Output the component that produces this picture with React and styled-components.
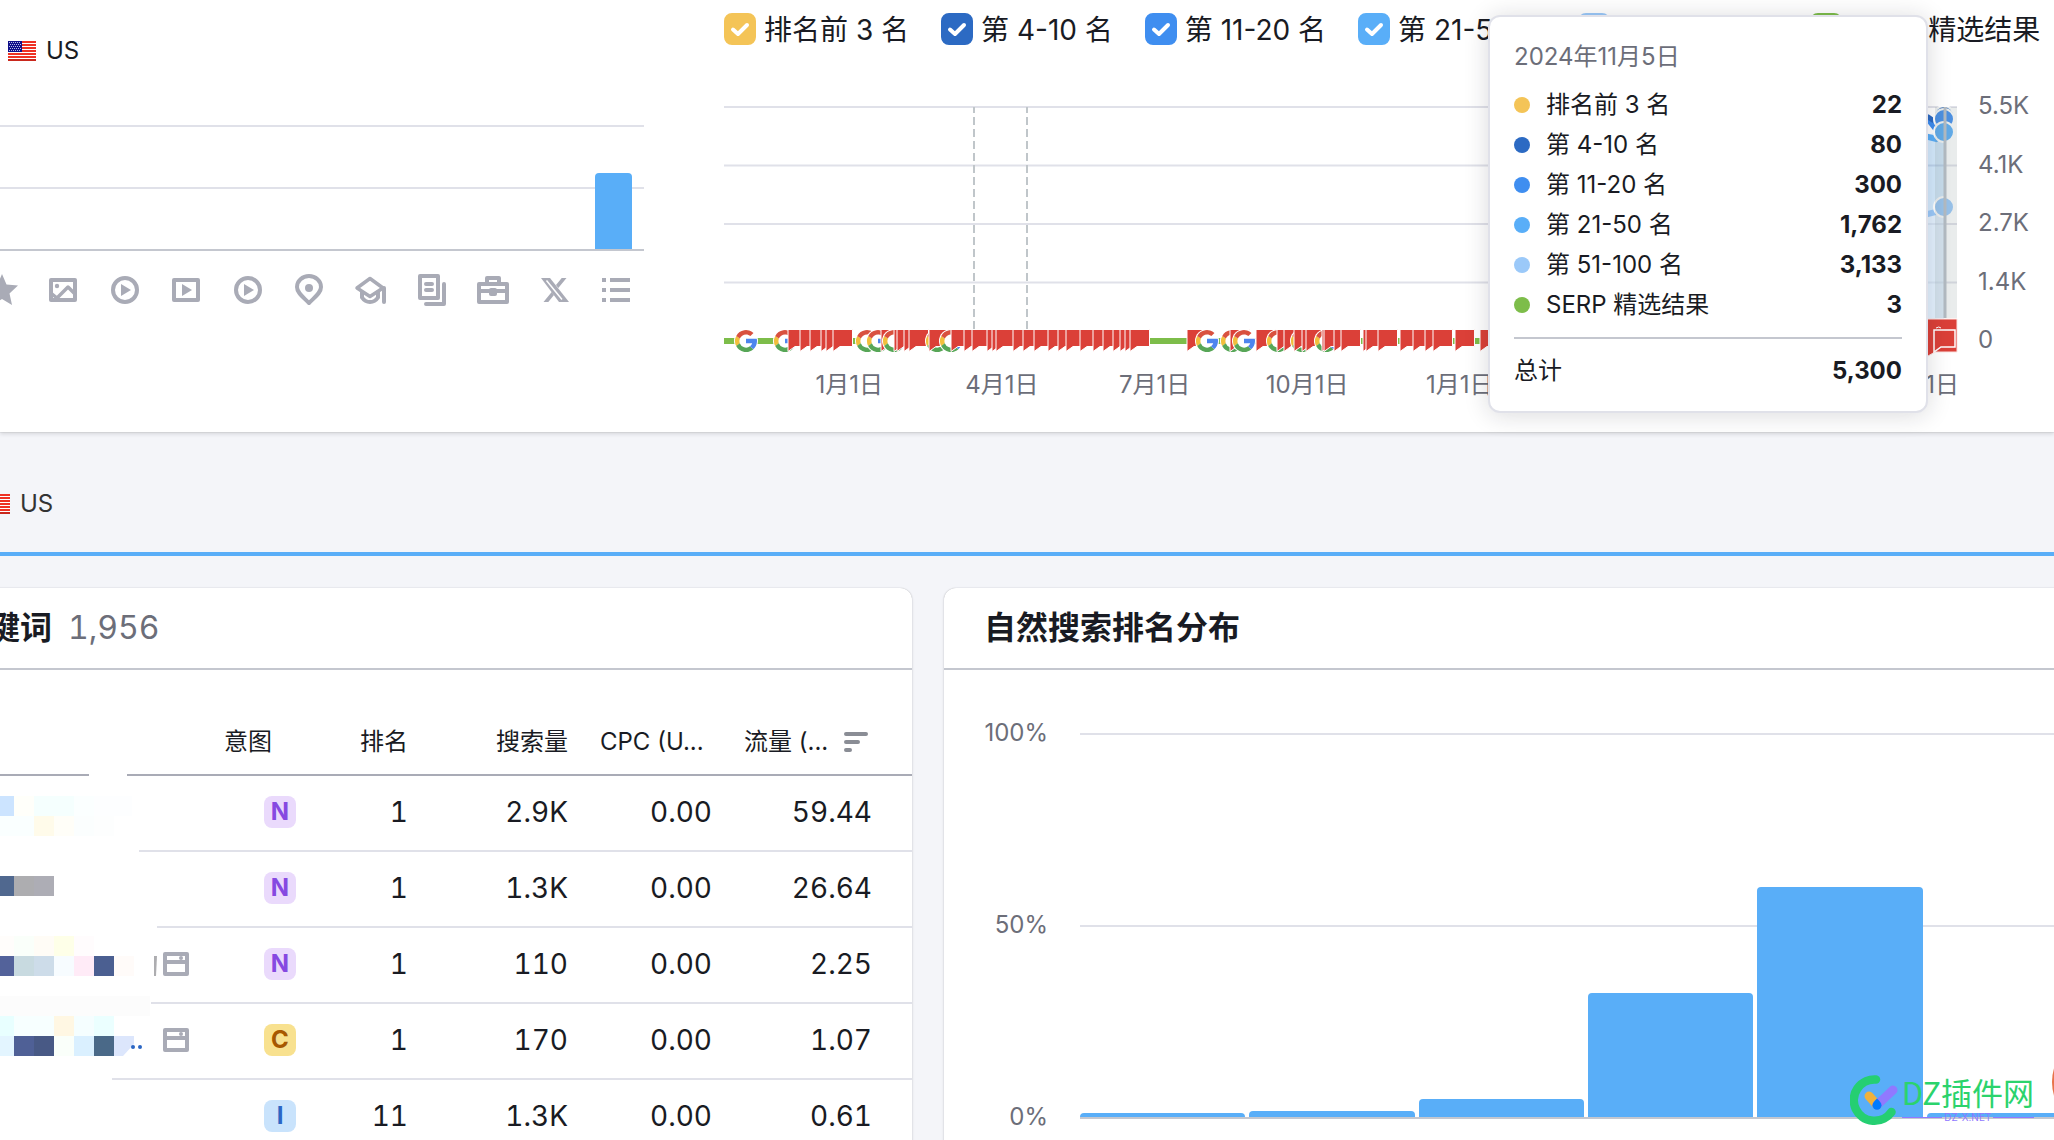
import React, { useState } from "react";
import styled, { createGlobalStyle } from "styled-components";

const GlobalStyle = createGlobalStyle`
  * {
    box-sizing: border-box;
  }
  body {
    margin: 0;
    background: #f4f5f9;
    color: #191b23;
    font-family: Inter, "Noto Sans CJK SC", sans-serif;
    font-size: 24px;
    line-height: 32px;
  }
`;

const LEGEND = [
  { id: "top3", label: "排名前 3 名", color: "#f4c457", value: "22" },
  { id: "p4", label: "第 4-10 名", color: "#2c6ac3", value: "80" },
  { id: "p11", label: "第 11-20 名", color: "#3f8ef0", value: "300" },
  { id: "p21", label: "第 21-50 名", color: "#59aef8", value: "1,762" },
  { id: "p51", label: "第 51-100 名", color: "#9bc9f9", value: "3,133" },
  { id: "serp", label: "SERP 精选结果", color: "#7dbd4a", value: "3" },
];

const DATES = ["1月1日", "4月1日", "7月1日", "10月1日", "1月1日", "4月1日", "7月1日", "10月1日"];

// g = google update, n = note; x is the left edge inside the plot
const MARKERS = [
  ["g", 11], ["g", 50], ["n", 64], ["n", 76], ["n", 86], ["n", 97], ["n", 102], ["n", 109],
  ["g", 132], ["n", 150], ["g", 143], ["n", 157], ["g", 159], ["n", 170], ["n", 173], ["n", 180], ["n", 185],
  ["g", 202], ["n", 205], ["g", 216], ["n", 227], ["n", 240], ["n", 248], ["n", 263], ["n", 268],
  ["n", 272], ["n", 289], ["n", 299], ["n", 310], ["n", 324], ["n", 334], ["n", 342], ["n", 356],
  ["n", 369], ["n", 379], ["n", 389], ["n", 396], ["n", 401], ["n", 406],
  ["n", 463], ["g", 472], ["g", 497], ["n", 506], ["g", 509], ["n", 532], ["g", 543], ["n", 553],
  ["n", 560], ["g", 567], ["n", 570], ["n", 578], ["n", 582], ["g", 591], ["n", 598], ["n", 600],
  ["n", 610], ["n", 617], ["n", 639], ["n", 642], ["n", 654], ["n", 676], ["n", 689], ["n", 701],
  ["n", 709], ["n", 731], ["n", 756],
];

const ROWS = [
  { intent: "N", page: false, rank: "1", volume: "2.9K", cpc: "0.00", traffic: "59.44" },
  { intent: "N", page: false, rank: "1", volume: "1.3K", cpc: "0.00", traffic: "26.64" },
  { intent: "N", page: true, rank: "1", volume: "110", cpc: "0.00", traffic: "2.25" },
  { intent: "C", page: true, rank: "1", volume: "170", cpc: "0.00", traffic: "1.07" },
  { intent: "I", page: false, rank: "11", volume: "1.3K", cpc: "0.00", traffic: "0.61" },
];

const INTENTS = {
  N: { bg: "#eadafc", fg: "#8649e1" },
  C: { bg: "#f8e18f", fg: "#a75800" },
  I: { bg: "#c9e3fc", fg: "#2b66c4" },
};

const DISTRIBUTION = [1, 1.6, 4.7, 32.4, 60, 1];

// [x, y, width, color] of the blurred keyword blocks, all 20px tall
const BLOCKS = [
  [0, 20, 14, "#cce4ff"], [14, 20, 20, "#fffffa"], [34, 20, 40, "#f5fffe"], [74, 20, 20, "#fbffff"],
  [94, 20, 38, "#fdfeff"],
  [0, 40, 34, "#faffff"], [34, 40, 20, "#fffbea"], [54, 40, 20, "#fffef8"], [74, 40, 20, "#fbfefe"],
  [94, 40, 20, "#fdfefe"],
  [0, 100, 14, "#50688f"], [14, 100, 20, "#adadb0"], [34, 100, 20, "#adadb5"],
  [0, 160, 14, "#fffdfb"], [14, 160, 20, "#fafffa"], [34, 160, 20, "#fffcf6"], [54, 160, 20, "#feffe8"], [74, 160, 20, "#fffcfd"],
  [0, 180, 14, "#53629a"], [14, 180, 20, "#c8dae0"], [34, 180, 20, "#cddce9"], [54, 180, 20, "#f7fcff"],
  [74, 180, 20, "#ffebf7"], [94, 180, 20, "#4b5f91"], [114, 180, 20, "#fffbf9"],
  [0, 220, 150, "#fcfcfc"],
  [0, 240, 14, "#e8ffff"], [14, 240, 40, "#f7ffff"], [54, 240, 20, "#fff7e3"], [74, 240, 20, "#f5feff"], [94, 240, 20, "#ebffff"],
  [0, 260, 14, "#e3f5ff"], [14, 260, 20, "#4f6096"], [34, 260, 20, "#485985"], [54, 260, 20, "#fafffa"],
  [74, 260, 20, "#daf0ff"], [94, 260, 20, "#4a6988"],
];

const Page = styled.main`
  position: relative;
  height: 100vh;
  overflow: hidden;
`;

const Overview = styled.section`
  display: grid;
  grid-template-columns: 644fr 1330fr;
  column-gap: 80px;
  padding-bottom: 31px;
  background: #fff;
  box-shadow: 0 0 1px rgba(25, 27, 35, 0.3), 0 2px 4px rgba(25, 27, 35, 0.14);
`;

const Column = styled.div`
  min-width: 0;
`;

const Country = styled.div`
  display: flex;
  align-items: center;
  gap: 10px;
  color: ${({ $muted }) => ($muted ? "#333" : "#191b23")};
`;

const OverviewCountry = styled(Country)`
  margin: 35px 0 58px;
  padding-left: 8px;
`;

const Plot = styled.div`
  position: relative;
  display: grid;
  grid-template-rows: repeat(2, ${({ $step }) => $step}px);
  border-bottom: 2px solid #c4c7cf;
`;

const GridLine = styled.div`
  border-top: 2px solid #e0e1e9;
`;

const Bars = styled.div`
  position: absolute;
  inset: 0;
  display: flex;
  align-items: flex-end;
  justify-content: flex-end;
  gap: 4px;
  padding-right: ${({ $end }) => $end || 0}px;
`;

const Bar = styled.div`
  flex: ${({ $width }) => ($width ? `0 0 ${$width}px` : "1 1 0")};
  border-radius: 4px 4px 0 0;
  background: #59aef8;
`;

const FeatureIcons = styled.div`
  display: flex;
  justify-content: space-between;
  margin: 23px 0 0 -14px;
  padding-right: 12px;
  color: #a9abb6;

  svg {
    display: block;
    width: 32px;
    height: 32px;
    flex: none;
  }
`;

const Legend = styled.div`
  display: flex;
  gap: 32px;
  padding-top: 13px;
  white-space: nowrap;
`;

const LegendItem = styled.label`
  display: flex;
  gap: 8px;
  font-size: 28px;
  line-height: 34px;
`;

const Check = styled.input`
  appearance: none;
  flex: none;
  width: 32px;
  height: 32px;
  margin: 0;
  border: 2px solid ${({ $color }) => $color};
  border-radius: 8px;
  background: #fff;

  &:checked {
    background: ${({ $color }) => $color}
      url("data:image/svg+xml,%3Csvg xmlns='http://www.w3.org/2000/svg' viewBox='0 0 32 32'%3E%3Cpath d='M9 16.5l5 4.500L23 12' fill='none' stroke='white' stroke-width='4' stroke-linecap='round' stroke-linejoin='round'/%3E%3C/svg%3E")
      center / 32px 32px;
  }
`;

const Trend = styled.div`
  display: grid;
  grid-template-columns: minmax(0, 1fr) 97px;
  margin-top: 46px;

  svg {
    display: block;
    width: 100%;
    overflow: visible;
  }
`;

const Scale = styled.div`
  display: flex;
  flex-direction: column;
  justify-content: space-between;
  padding: 1px 0 1px 21px;
  color: #6c6e79;
  line-height: 24px;
`;

const Dates = styled.div`
  display: grid;
  grid-template-columns: repeat(8, 1fr);
  margin-top: 16px;
  padding: 0 60px 0 49px;
  color: #6c6e79;
  text-align: center;
  white-space: nowrap;
`;

const Tooltip = styled.div`
  position: absolute;
  top: 15px;
  right: 126px;
  width: 440px;
  padding: 24px;
  border: 2px solid #e0e1e9;
  border-radius: 12px;
  background: #fff;
  box-shadow: 0 2px 24px rgba(25, 27, 35, 0.16);
`;

const TooltipDate = styled.div`
  margin-bottom: 12px;
  color: #6c6e79;
`;

const TooltipRow = styled.div`
  display: flex;
  align-items: center;
  gap: 16px;
  height: 40px;
`;

const Dot = styled.span`
  width: 16px;
  height: 16px;
  border-radius: 50%;
  background: ${({ $color }) => $color};
`;

const Value = styled.strong`
  margin-left: auto;
  font-weight: 700;
`;

const TooltipTotal = styled.div`
  display: flex;
  margin-top: 12px;
  padding-top: 16px;
  border-top: 2px solid #c4c7cf;
`;

const Section = styled.header`
  padding: 56px 0 32px;
  border-bottom: 4px solid #59aef8;
`;

const SectionCountry = styled(Country)`
  margin-left: -18px;
`;

const Cards = styled.div`
  display: grid;
  grid-template-columns: 952fr 1148fr;
  gap: 32px;
  margin: 32px -38px 0 -40px;
`;

const Card = styled.section`
  position: relative;
  min-width: 0;
  border-radius: 12px;
  background: #fff;
  box-shadow: 0 0 1px rgba(25, 27, 35, 0.3), 0 1px 3px rgba(25, 27, 35, 0.14);
`;

const CardHeader = styled.div`
  display: flex;
  align-items: center;
  gap: 16px;
  height: 82px;
  padding: 0 ${({ $start }) => $start}px;
  border-bottom: 2px solid #c4c7cf;
  font-size: 32px;
`;

const Title = styled.h2`
  margin: 0;
  font-size: 32px;
  font-weight: 700;
`;

const Count = styled.span`
  color: #6c6e79;
  font-variant-numeric: tabular-nums;
`;

const Table = styled.table`
  width: 100%;
  table-layout: fixed;
  border-collapse: separate;
  border-spacing: 0;
  white-space: nowrap;
`;

const Col = styled.col`
  width: ${({ $width }) => $width}px;
`;

const Th = styled.th`
  padding: 56px 16px 16px;
  border-bottom: 2px solid #a9abb6;
  font-weight: 400;
  text-align: ${({ $align }) => $align || "left"};
`;

const Sort = styled.button`
  display: flex;
  align-items: center;
  gap: 16px;
  padding: 0;
  border: 0;
  background: none;
  color: inherit;
  font: inherit;
`;

const Td = styled.td`
  height: 76px;
  padding: 20px ${({ $end }) => $end || 16}px 22px 16px;
  border-bottom: 2px solid #e0e1e9;
  font-size: 28px;
  font-variant-numeric: tabular-nums;
  text-align: right;

  svg {
    display: block;
    margin: 0 0 0 auto;
  }
`;

const Badge = styled.span`
  display: block;
  width: 32px;
  height: 32px;
  margin-left: auto;
  border-radius: 8px;
  background: ${({ $intent }) => INTENTS[$intent].bg};
  color: ${({ $intent }) => INTENTS[$intent].fg};
  font-size: 24px;
  font-weight: 700;
  text-align: center;
`;

const Mask = styled.svg`
  position: absolute;
  top: 186px;
  left: 40px;
`;

const Distribution = styled.div`
  display: grid;
  grid-template-columns: 104px minmax(0, 1fr);
  column-gap: 32px;
  padding-top: 51px;
`;

const Percents = styled.div`
  display: flex;
  flex-direction: column;
  justify-content: space-between;
  height: 408px;
  color: #6c6e79;
  line-height: 24px;
  text-align: right;
`;

const DistributionPlot = styled(Plot)`
  align-self: start;
  margin-top: 12px;
`;

const Watermark = styled.div`
  position: absolute;
  right: 20px;
  bottom: 14px;
  display: flex;
  gap: 2px;
  color: #2bd36c;
  font-family: "Noto Sans CJK SC", sans-serif;
`;

const WatermarkName = styled.div`
  font-size: 31px;
  line-height: 36px;
`;

const WatermarkSite = styled.div`
  display: flex;
  align-items: center;
  gap: 2px;
  color: #9079ff;
  font-family: Inter, sans-serif;
  font-size: 10px;
  line-height: 14px;

  &::before,
  &::after {
    content: "";
    flex: 1;
    height: 1px;
    background: #9079ff;
  }
`;

const HelpBubble = styled.button`
  position: absolute;
  right: -94px;
  bottom: 10px;
  width: 96px;
  height: 96px;
  border: 0;
  border-radius: 50%;
  background: #e8734a;
`;

function Flag() {
  return (
    <svg width="28" height="20" viewBox="0 0 28 20" shapeRendering="crispEdges">
      <rect width="28" height="20" fill="#fff" />
      {[0, 3, 6, 9, 12, 15, 18].map((y) => (
        <rect key={y} y={y} width="28" height="2" fill={y === 18 ? "#c9281d" : "#ee3124"} />
      ))}
      <rect width="14" height="11" fill="#10108a" />
      {[1, 3, 5, 7, 9].map((y) => (
        <path key={y} d={`M${y % 4 === 1 ? 1 : 2} ${y + 0.5}h11`} stroke="#b9bbe6" strokeDasharray="1 1" />
      ))}
    </svg>
  );
}

function Icons() {
  const line = { fill: "none", stroke: "currentColor", strokeWidth: 4, strokeLinejoin: "round" };
  const play = <path d="M12 10l10 6-10 6z" fill="currentColor" />;
  return (
    <FeatureIcons>
      <svg viewBox="0 0 32 32">
        <path d="M16 0l4.500 10.500L32 11.500l-8.500 8L26 31l-10-6-10 6 2.500-11.500L0 11.500l11.500-1z" fill="currentColor" />
      </svg>
      <svg viewBox="0 0 32 32">
        <rect x="4" y="6" width="24" height="20" {...line} />
        <circle cx="10" cy="12" r="2.200" fill="currentColor" />
        <path d="M5 20l5 4L21 13l7 7" {...line} strokeWidth="3.500" />
      </svg>
      <svg viewBox="0 0 32 32"><circle cx="16" cy="16" r="12" {...line} />{play}</svg>
      <svg viewBox="0 0 32 32"><rect x="4" y="6" width="24" height="20" {...line} />{play}</svg>
      <svg viewBox="0 0 32 32"><circle cx="16" cy="16" r="12" {...line} />{play}</svg>
      <svg viewBox="0 0 32 32">
        <path d="M16 29C9 22 4 18.500 4 13a12 11 0 0 1 24 0c0 5.500-5 9-12 16z" {...line} />
        <circle cx="16" cy="14" r="4" fill="currentColor" />
      </svg>
      <svg viewBox="0 0 32 32">
        <path d="M16 4.500L29 14 16 22.500 3 14z" {...line} strokeWidth="3.500" />
        <path d="M8 18v5.500c4 6 12 6 16 0V18" {...line} />
        <path d="M30 14v14" {...line} strokeLinecap="round" />
      </svg>
      <svg viewBox="0 0 32 32">
        <rect x="4" y="2" width="18" height="22" {...line} />
        <path d="M10 10h6M10 16h6" {...line} strokeLinecap="round" />
        <path d="M28 10v20H10" {...line} strokeLinecap="round" />
      </svg>
      <svg viewBox="0 0 32 32">
        <path d="M2 10h28v18H2zM10 9V4h12v5M2 17h28" {...line} />
        <rect x="12" y="14" width="8" height="8" rx="2" fill="currentColor" />
      </svg>
      <svg viewBox="0 0 32 32">
        <path d="M2 4h9l19 24H20z" fill="currentColor" />
        <path d="M7.500 6.500L23 25.500" stroke="#fff" strokeWidth="1.500" />
        <path d="M27.500 4h-4.800L17 11l2.300 3zM4.500 28h4.800L15 21l-2.300-3z" fill="currentColor" />
      </svg>
      <svg viewBox="0 0 32 32">
        <path d="M2 6h4M2 16h4M2 26h4M10 6h20M10 16h20M10 26h20" {...line} />
      </svg>
    </FeatureIcons>
  );
}

function GoogleMark({ x }) {
  return (
    <g transform={`translate(${x} 223)`}>
      <circle cx="11" cy="11" r="12" fill="#fff" />
      <g transform="translate(-2.200 -2.200) scale(0.55)">
        <path fill="#f2bf3c" d="M6.300 14.700l6.600 4.800a12 12 0 0 0-.2 8.500l-6.500 5.100a20 20 0 0 1 .1-18.400z" />
        <path fill="#d9513f" d="M6.300 14.700l6.600 4.800C14.700 15.100 19 12 24 12c3.100 0 5.800 1.200 8 3l5.600-5.600A20 20 0 0 0 6.300 14.700z" />
        <path fill="#57a657" d="M24 44c5.200 0 9.900-2 13.400-5.200l-6.200-5.200A12 12 0 0 1 12.700 28l-6.500 5.100C9.500 39.600 16.200 44 24 44z" />
        <path fill="#4d85ee" d="M43.600 20H24v8h11.300a12 12 0 0 1-4.100 5.600l6.200 5.200C37 39.200 44 34 44 24c0-1.300-.1-2.700-.4-4z" />
      </g>
    </g>
  );
}

function TrendChart() {
  return (
    <svg viewBox="0 -14 1233 260">
      {[0, 58.5, 117, 175.5].map((y) => (
        <path key={y} d={`M0 ${y}H1233`} stroke="#e0e1e9" strokeWidth="2" />
      ))}
      {[250, 303].map((x) => (
        <path key={x} d={`M${x} 0V223`} stroke="#c0c6ca" strokeWidth="2" strokeDasharray="8 4" strokeDashoffset="2" />
      ))}
      <path d="M1160 34l44-6 16-5v212h-60z" fill="#59aef8" fillOpacity="0.26" />
      <path d="M1160 108l44-1 16-7v135h-60z" fill="#fff" fillOpacity="0.36" />
      <path d="M1190 24l14 6 8 2 8-8" fill="none" stroke="#59aef8" strokeWidth="6" />
      <path d="M1190 6l14 6 8 10 8-8" fill="none" stroke="#3f8ef0" strokeWidth="6" />
      <path d="M1190 8l14 2 6 4" fill="none" stroke="#2c6ac3" strokeWidth="5" />
      <path d="M1190 106l14 1 8-2 8-5" fill="none" stroke="#9bc9f9" strokeWidth="6" />
      <circle cx="1220" cy="9" r="10" fill="#2c6ac3" stroke="#fff" strokeWidth="2" />
      <circle cx="1220" cy="12" r="10" fill="#3f8ef0" stroke="#fff" strokeWidth="2" />
      <circle cx="1220" cy="25" r="10" fill="#59aef8" stroke="#fff" strokeWidth="2" />
      <circle cx="1220" cy="100" r="10" fill="#9bc9f9" stroke="#fff" strokeWidth="2" />
      <rect x="1211" width="22" height="211" fill="#8a9a9c" fillOpacity="0.19" />
      <path d="M1221 0v211" stroke="#b2bac1" strokeWidth="3" />
      <path d="M0 234H1233" stroke="#7dbd4a" strokeWidth="6" />
      {MARKERS.map(([kind, x], i) =>
        kind === "g" ? (
          <GoogleMark key={i} x={x} />
        ) : (
          <path key={i} d={`M${x} 222.500h19.500v17h-12.500l-7 5z`} fill="#db4038" stroke="#fff" />
        )
      )}
      <path d="M1197 212h36v33h-22l-14 8z" fill="#db4038" stroke="#fbe3e1" />
      <path d="M1210 223h21v17h-14l-7 5z" fill="none" stroke="#fff" strokeWidth="1.500" />
      <path d="M1212 221q3-2 5 0" fill="none" stroke="#fff" />
    </svg>
  );
}

function PageIcon() {
  return (
    <svg width="32" height="32" viewBox="0 0 32 32" fill="none" stroke="#a9abb6" strokeWidth="4" strokeLinejoin="round">
      <path d="M5 6h22v20H5zM5 14h22" />
      <circle cx="21" cy="10" r="2" fill="#a9abb6" stroke="none" />
    </svg>
  );
}

function KeywordMask() {
  return (
    <Mask width="160" height="312" viewBox="0 0 160 312">
      <path d="M89 0h38v6H89zM0 70h139v12H0zM0 146h157v12H0zM0 222h151v12H0zM0 298h112v12H0z" fill="#fff" />
      <g transform="translate(0 2)">
        {BLOCKS.map(([x, y, w, color]) => (
          <rect key={`${x}-${y}`} x={x} y={y} width={w} height="20" fill={color} />
        ))}
        <path d="M114 260h20v8l-11 12h-9z" fill="#dce6fc" />
        <path d="M154 180h3l-1 20h-2z" fill="#adadb0" />
        <circle cx="133" cy="271" r="2" fill="#2b66c4" />
        <circle cx="140" cy="271" r="2" fill="#2b66c4" />
      </g>
    </Mask>
  );
}

function Overlay() {
  return (
    <Tooltip role="tooltip">
      <TooltipDate>2024年11月5日</TooltipDate>
      {LEGEND.map((item) => (
        <TooltipRow key={item.id}>
          <Dot $color={item.color} />
          <span>{item.label}</span>
          <Value>{item.value}</Value>
        </TooltipRow>
      ))}
      <TooltipTotal>
        <span>总计</span>
        <Value>5,300</Value>
      </TooltipTotal>
    </Tooltip>
  );
}

export default function App() {
  const [hidden, setHidden] = useState([]);

  const toggle = (id) => {
    setHidden(hidden.includes(id) ? hidden.filter((h) => h !== id) : [...hidden, id]);
  };

  return (
    <Page>
      <GlobalStyle />
      <Overview>
        <Column>
          <OverviewCountry>
            <Flag />
            <span>US</span>
          </OverviewCountry>
          <Plot $step={62}>
            <GridLine />
            <GridLine />
            <Bars $end={12}>
              <Bar $width={37} style={{ height: "61%" }} />
            </Bars>
          </Plot>
          <Icons />
        </Column>
        <Column>
          <Legend>
            {LEGEND.map((item) => (
              <LegendItem key={item.id}>
                <Check
                  type="checkbox"
                  $color={item.color}
                  checked={!hidden.includes(item.id)}
                  onChange={() => toggle(item.id)}
                />
                <span>{item.label}</span>
              </LegendItem>
            ))}
          </Legend>
          <Trend>
            <TrendChart />
            <Scale>
              <span>5.5K</span>
              <span>4.1K</span>
              <span>2.7K</span>
              <span>1.4K</span>
              <span>0</span>
            </Scale>
          </Trend>
          <Dates>
            {DATES.map((date, i) => (
              <span key={i}>{date}</span>
            ))}
          </Dates>
        </Column>
      </Overview>
      <Overlay />

      <Section>
        <SectionCountry $muted>
          <Flag />
          <span>US</span>
        </SectionCountry>
      </Section>

      <Cards>
        <Card>
          <CardHeader $start={28}>
            <Title>键词</Title>
            <Count>1,956</Count>
          </CardHeader>
          <Table>
            <colgroup>
              <col />
              <Col $width={104} />
              <Col $width={112} />
              <Col $width={160} />
              <Col $width={144} />
              <Col $width={184} />
            </colgroup>
            <thead>
              <tr>
                <Th />
                <Th>意图</Th>
                <Th $align="right">排名</Th>
                <Th $align="right">搜索量</Th>
                <Th>CPC (U...</Th>
                <Th>
                  <Sort type="button">
                    流量 (...
                    <svg width="24" height="20" viewBox="0 0 24 20" stroke="#8a8d95" strokeWidth="4" strokeLinecap="round">
                      <path d="M2 2h20M2 10h12M2 18h4" />
                    </svg>
                  </Sort>
                </Th>
              </tr>
            </thead>
            <tbody>
              {ROWS.map((row, i) => (
                <tr key={i}>
                  <Td>{row.page && <PageIcon />}</Td>
                  <Td>
                    <Badge $intent={row.intent}>{row.intent}</Badge>
                  </Td>
                  <Td>{row.rank}</Td>
                  <Td>{row.volume}</Td>
                  <Td>{row.cpc}</Td>
                  <Td $end={40}>{row.traffic}</Td>
                </tr>
              ))}
            </tbody>
          </Table>
          <KeywordMask />
        </Card>
        <Card>
          <CardHeader $start={40}>
            <Title>自然搜索排名分布</Title>
          </CardHeader>
          <Distribution>
            <Percents>
              <span>100%</span>
              <span>50%</span>
              <span>0%</span>
            </Percents>
            <DistributionPlot $step={192}>
              <GridLine />
              <GridLine />
              <Bars>
                {DISTRIBUTION.map((value, i) => (
                  <Bar key={i} style={{ height: `${value}%` }} />
                ))}
              </Bars>
            </DistributionPlot>
          </Distribution>
        </Card>
      </Cards>

      <Watermark>
        <svg width="50" height="52" viewBox="0 4 50 52" fill="none" strokeLinecap="round">
          <path d="M26 9.500A20.700 20.700 0 1 0 41.500 42" stroke="#25cf72" strokeWidth="8.500" />
          <path d="M19 26l8 9" stroke="#efb13c" strokeWidth="9" />
          <path d="M43 20L27 35" stroke="#9079ff" strokeWidth="9" />
          <path d="M27 28.500c3 3 4.500 4.500 4.500 6.800a4.500 4.500 0 0 1-9 0c0-2.300 1.500-3.800 4.500-6.800z" fill="#007bff" />
        </svg>
        <div>
          <WatermarkName>DZ插件网</WatermarkName>
          <WatermarkSite>DZ-X.NET</WatermarkSite>
        </div>
      </Watermark>
      <HelpBubble type="button" aria-label="帮助" />
    </Page>
  );
}
